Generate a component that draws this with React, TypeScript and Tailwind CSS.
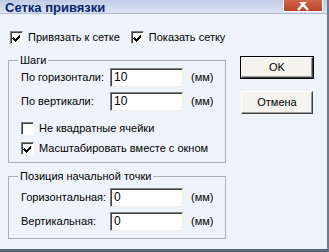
import React from 'react'

const font = { fontFamily: '"Liberation Sans", Arial, sans-serif' }

function Check({ checked }: { checked?: boolean }) {
  return (
    <span className="w-[13px] h-[13px] shrink-0 bg-white border border-t-[#808080] border-l-[#808080] border-b-white border-r-white shadow-[inset_1px_1px_0_#404040] flex items-center justify-center">
      {checked && (
        <svg width="9" height="9" viewBox="0 0 9 9" shapeRendering="crispEdges">
          <path d="M1 4h1v1h1v1h1v-1h1v-1h1v-1h1v-1h1v3h-1v1h-1v1h-1v1h-1v1h-1v-1h-1v-1h-1v-1h-1z" fill="#000" />
        </svg>
      )}
    </span>
  )
}

function CheckRow({ label, checked, className = '' }: { label: string; checked?: boolean; className?: string }) {
  return (
    <div className={`flex items-center gap-[5px] h-[13px] ${className}`}>
      <Check checked={checked} />
      <span className="leading-[13px] whitespace-nowrap">{label}</span>
    </div>
  )
}

function Field({ label, value, className = '' }: { label: string; value: string; className?: string }) {
  return (
    <div className={`flex items-center h-[19px] ${className}`}>
      <span className="w-[89px] whitespace-nowrap">{label}</span>
      <div className="w-[73px] h-[19px] bg-white border border-t-[#808080] border-l-[#808080] border-b-[#F1EFE2] border-r-[#F1EFE2] shadow-[inset_1px_1px_0_#404040] pl-[3px] text-[12px] leading-[17px]">
        {value}
      </div>
      <span className="ml-[8px]">(мм)</span>
    </div>
  )
}

function Group({ title, className = '', children }: { title: string; className?: string; children: React.ReactNode }) {
  return (
    <div className={`relative border border-[#A9AFBA] pl-[12px] ${className}`}>
      <span className="absolute left-[9px] -top-[7px] px-[2px] bg-[#EFF3FB] leading-[13px] whitespace-nowrap">{title}</span>
      {children}
    </div>
  )
}

function Button({ children, primary, className = '' }: { children: React.ReactNode; primary?: boolean; className?: string }) {
  return (
    <div className={`${primary ? 'border border-black' : ''} ${className}`}>
      <div className={`${primary ? 'h-[21px]' : 'h-[23px]'} bg-[#F5F4EF] border border-t-white border-l-white border-b-[#404040] border-r-[#404040] shadow-[inset_-1px_-1px_0_#9A9A9A] flex items-center justify-center`}>
        {children}
      </div>
    </div>
  )
}

export default function App() {
  return (
    <div style={font} className="w-[329px] h-[252px] bg-[#EFF3FB] text-[11px] text-black flex flex-col overflow-hidden border-r-2 border-r-[#6F7A8C] border-b-[3px] border-b-[#5B6678]">
      {/* Title bar */}
      <div className="h-[13px] shrink-0 flex items-end bg-gradient-to-b from-[#C0CCE6] to-[#DCE3F2] relative">
        <span className="ml-[5px] text-[13px] font-bold text-[#0B2470] leading-[13px] -mb-[1px]">Сетка привязки</span>
        <div className="absolute left-[283px] top-0 w-[40px] h-[12px] rounded-b-[2px] border border-t-0 border-white bg-gradient-to-b from-[#D5664A] to-[#B8432C] flex items-end justify-center overflow-hidden">
          <svg width="13" height="9" viewBox="0 0 13 9">
            <path d="M1 -3 L11 8 M11 -3 L1 8" stroke="#fff" strokeWidth="2.5" />
          </svg>
        </div>
      </div>
      <div className="h-px shrink-0 bg-[#AEBAD0]" />

      {/* Body */}
      <div className="flex pl-[8px]">
        <div className="w-[218px]">
          <div className="flex mt-[17px] pl-[2px]">
            <CheckRow label="Привязать к сетке" checked />
            <CheckRow label="Показать сетку" checked className="ml-[11px]" />
          </div>

          <Group title="Шаги" className="mt-[16px] h-[103px] pt-[7px]">
            <Field label="По горизонтали:" value="10" />
            <Field label="По вертикали:" value="10" className="mt-[5px]" />
            <CheckRow label="Не квадратные ячейки" className="mt-[11px]" />
            <CheckRow label="Масштабировать вместе с окном" checked className="mt-[7px]" />
          </Group>

          <Group title="Позиция начальной точки" className="mt-[13px] h-[63px] pt-[11px]">
            <Field label="Горизонтальная:" value="0" />
            <Field label="Вертикальная:" value="0" className="mt-[5px]" />
          </Group>
        </div>

        <div className="ml-[14px] w-[74px] pt-[42px]">
          <Button primary>OK</Button>
          <Button className="mt-[12px] ml-px w-[72px]">Отмена</Button>
        </div>
      </div>
    </div>
  )
}
